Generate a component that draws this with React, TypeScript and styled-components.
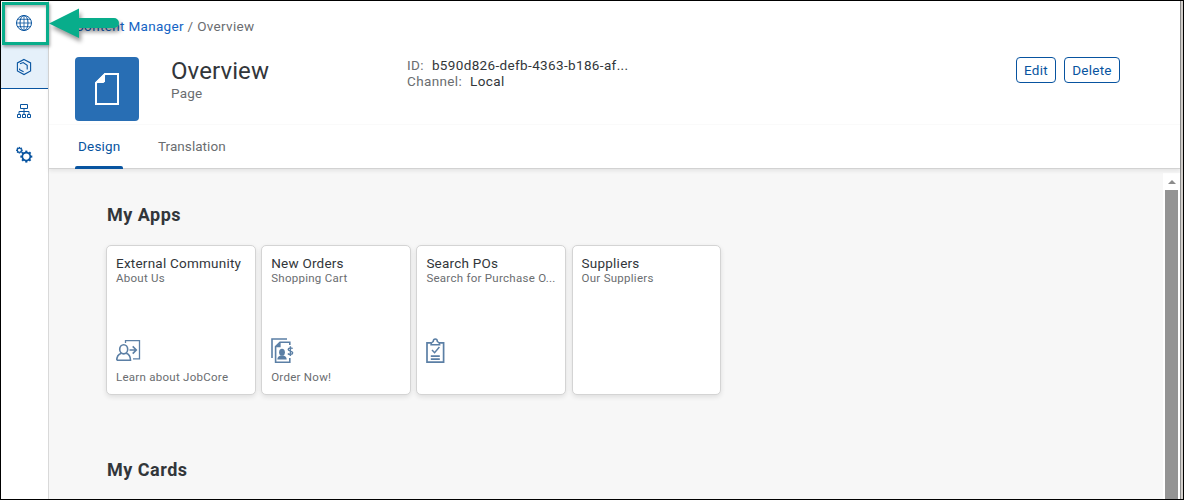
import React from "react";
import styled, { createGlobalStyle } from "styled-components";

const GlobalStyle = createGlobalStyle`
  * { box-sizing: border-box; }
  body { margin: 0; font-family: Roboto, "Liberation Sans", sans-serif; font-size: 13.5px; color: #32363a; }
`;

const Frame = styled.div`
  position: relative;
  display: flex;
  width: 1184px;
  height: 500px;
  border: 1px solid #000;
  background: #fff;
  overflow: hidden;
`;

const SideNav = styled.nav`
  width: 48px;
  flex: none;
  border-right: 1px solid #d9d9d9;
`;

const NavItem = styled.div<{ $active?: boolean }>`
  height: 44px;
  display: flex;
  align-items: center;
  justify-content: center;
  padding-right: 1px;
  padding-top: 1px;
  background: ${(p) => (p.$active ? "#e5f0fa" : "transparent")};
  border-bottom: 1px solid ${(p) => (p.$active ? "#0854a0" : "transparent")};
  svg { display: block; }
`;

const Main = styled.main`
  width: 1131px;
  flex: none;
  display: flex;
  flex-direction: column;
`;

const Edge = styled.div`
  flex: 1;
  background: #d4d0cc;
  border-left: 1px solid #8c8c8c;
`;

const Header = styled.header`
  position: relative;
  flex: none;
  height: 168px;
  background: #fff;
  border-bottom: 1px solid #d2d2d2;
  box-shadow: 0 2px 4px rgba(0, 0, 0, 0.08);
`;

const Breadcrumb = styled.div`
  height: 56px;
  padding: 16px 0 0 26px;
  line-height: 18px;
  color: #6a6d70;
  letter-spacing: 0.33px;
  white-space: pre;
  a { color: #1463c4; }
`;

const ObjectRow = styled.div`
  display: flex;
  height: 68px;
  padding: 0 60px 0 26px;
  border-bottom: 1px solid #fafafa;
`;

const Avatar = styled.div`
  width: 64px;
  height: 64px;
  border-radius: 4px;
  background: #286eb4;
  display: flex;
  align-items: center;
  justify-content: center;
`;

const TitleBlock = styled.div`
  width: 236px;
  margin-left: 32px;
`;

const Title = styled.h1`
  margin: 0;
  font-size: 24px;
  line-height: 28px;
  font-weight: 400;
  letter-spacing: 0.1px;
`;

const Subtitle = styled.div`
  color: #6a6d70;
  line-height: 17px;
  letter-spacing: 0.2px;
`;

const Facts = styled.dl`
  margin: 0;
  flex: 1;
`;

const Fact = styled.div`
  display: flex;
  gap: 8px;
  line-height: 16px;
  letter-spacing: 0.36px;
  dt { color: #6a6d70; }
  dd { margin: 0; }
`;

const Actions = styled.div`
  display: flex;
  gap: 8px;
`;

const Button = styled.button<{ $width: number }>`
  width: ${(p) => p.$width}px;
  height: 26px;
  padding: 0;
  border: 1px solid #0854a0;
  border-radius: 4px;
  background: #fff;
  color: #0854a0;
  font: inherit;
  letter-spacing: 0.25px;
`;

const Tabs = styled.div`
  display: flex;
  gap: 29px;
  height: 44px;
  padding-left: 26px;
`;

const Tab = styled.div<{ $active?: boolean }>`
  height: 44px;
  width: ${(p) => (p.$active ? "48px" : "auto")};
  padding: 0 3px;
  margin-right: 3px;
  line-height: 42px;
  letter-spacing: ${(p) => (p.$active ? 0.2 : 0.05)}px;
  color: ${(p) => (p.$active ? "#0854a0" : "#6a6d70")};
  &::after {
    content: "";
    display: ${(p) => (p.$active ? "block" : "none")};
    width: 48px;
    height: 3px;
    margin: -1px 0 0 -3px;
    border-radius: 2px 2px 0 0;
    background: #0854a0;
  }
`;

const Body = styled.div`
  display: flex;
  flex: 1;
  min-height: 0;
  background: #f7f7f7;
`;

const Content = styled.div`
  flex: 1;
  padding: 35px 0 0 57px;
`;

const SectionTitle = styled.h2`
  margin: 0 0 0 1px;
  font-size: 18px;
  line-height: 22px;
  font-weight: 700;
  letter-spacing: 0.5px;
`;

const CardRow = styled.div`
  display: flex;
  gap: 5.7px;
  margin: 19px 0 64px;
`;

const Card = styled.article`
  width: 149.5px;
  height: 150px;
  padding: 9px 8px 9px 9px;
  display: flex;
  flex-direction: column;
  background: #fff;
  border: 1px solid #d4d4d4;
  border-radius: 5px;
  box-shadow: 0 2px 5px rgba(0, 0, 0, 0.1);
`;

const CardTitle = styled.div`
  line-height: 17px;
  white-space: nowrap;
  letter-spacing: 0.23px;
`;

const CardText = styled.div`
  height: 14px;
  font-size: 11.5px;
  line-height: 13px;
  color: #6a6d70;
  white-space: nowrap;
  letter-spacing: 0.27px;
`;

const CardIcon = styled.div`
  margin-top: auto;
  height: 26px;
  margin-bottom: 7px;
  svg { display: block; }
`;

const ScrollTrack = styled.div`
  width: 17px;
  margin-top: 4px;
  padding: 0 1px 0 2px;
  background: #fff;
`;

const ScrollUp = styled.div`
  height: 17px;
  display: flex;
  justify-content: center;
  align-items: center;
`;

const ScrollThumb = styled.div`
  width: 13px;
  height: 310px;
  background: #949494;
`;

const Highlight = styled.div`
  position: absolute;
  left: 1px;
  top: 1px;
  width: 47px;
  height: 43px;
  border: 3px solid #08ad8b;
  box-shadow: 1px 2px 3px rgba(0, 0, 0, 0.35), inset 1px 2px 3px rgba(0, 0, 0, 0.3);
`;

const Pointer = styled.svg`
  position: absolute;
  left: 44px;
  top: 0;
  filter: drop-shadow(2px 4px 2px rgba(0, 0, 0, 0.4));
`;

const GlobeIcon = () => (
  <svg width="18" height="18" viewBox="0 0 18 18" fill="none" stroke="#0854a0">
    <circle cx="9" cy="9" r="7.5" />
    <ellipse cx="9" cy="9" rx="4" ry="7.5" />
    <path d="M9 1.5v15M1.5 9h15M3 5.3h12M3 12.7h12" strokeWidth=".8" />
  </svg>
);

const HexIcon = () => (
  <svg width="18" height="18" viewBox="0 0 18 18" fill="none" stroke="#0854a0" strokeWidth="1.1">
    <path d="M9 1.4L15.6 4.9V13L9 16.6L2.4 13V4.9Z" />
    <path d="M5 5.8L8.2 4.6L12.2 7.4V11.6M4.6 10.4V11.7L8.6 13.8" />
  </svg>
);

const TreeIcon = () => (
  <svg width="18" height="18" viewBox="0 0 18 18" fill="none" stroke="#0854a0">
    <path d="M5.5 2.5h7v4h-7zM2.5 12.5h3v3h-3zM7.5 12.5h3v3h-3zM12.5 12.5h3v3h-3z" />
    <path d="M9 6.5v6M4 12.5v-3h10v3" />
  </svg>
);

const Gear = ({ x, y, r, w, t }: { x: number; y: number; r: number; w: number; t: number }) => (
  <g transform={`translate(${x} ${y})`}>
    <circle r={r} strokeWidth={w} />
    {Array.from({ length: 8 }, (_, i) => (
      <path key={i} d={`M0 ${-r}V${-r - t}`} strokeWidth={w + 0.4} transform={`rotate(${i * 45})`} />
    ))}
  </g>
);

const GearsIcon = () => (
  <svg width="18" height="18" viewBox="0 0 18 18" fill="none" stroke="#0854a0">
    <Gear x={4.4} y={4.2} r={2} w={1.1} t={1.3} />
    <Gear x={11.3} y={10.6} r={4} w={1.7} t={2} />
  </svg>
);

const PageIcon = () => (
  <svg width="24" height="32" viewBox="0 0 24 32">
    <path d="M10 1H23V31H1V10z" fill="none" stroke="#fff" strokeWidth="2" />
    <path d="M10 0V8.5L8.5 10H0z" fill="#fff" />
  </svg>
);

const VisitorIcon = () => (
  <svg width="26" height="26" viewBox="0 0 26 26" fill="none" stroke="#5b7fa5" strokeWidth="1.6">
    <path d="M9.5 5V2.7H23.5V20.8H17" strokeWidth="1.3" />
    <ellipse cx="7.7" cy="11.3" rx="4" ry="4.6" />
    <path d="M.8 22.2C.8 18.3 3 16 5.2 15.2M10.2 15.2C12.6 16 14.5 18.3 14.5 22.2H.8" />
    <path d="M13.5 12h6.8M16.7 8.4l3.6 3.6-3.6 3.6" />
  </svg>
);

const InvoiceIcon = () => (
  <svg width="26" height="26" viewBox="0 0 26 26" fill="none" stroke="#5b7fa5" strokeWidth="1.6">
    <path d="M1 20V1H16" />
    <path d="M18.8 7V4.2H9L4.6 8.6V24.2H18.8V20" />
    <path d="M9.6 4v5.2H4.2z" fill="#5b7fa5" stroke="none" />
    <ellipse cx="11" cy="14.3" rx="2.9" ry="3.5" fill="#5b7fa5" stroke="none" />
    <path d="M6.3 21.4c0-2.5 1.6-3.5 3.3-4h2.8c1.7.5 3.3 1.5 3.3 4z" fill="#5b7fa5" stroke="none" />
    <path d="M21.6 10.7C20.8 9.5 17.2 9.6 17.2 11.5C17.2 13.6 21.7 12.5 21.7 14.8C21.7 16.9 17.8 16.8 16.9 15.5M19.4 8.2V18" strokeWidth="1.4" />
  </svg>
);

const ClipboardIcon = () => (
  <svg width="19" height="26" viewBox="0 0 19 26" fill="none" stroke="#5b7fa5" strokeWidth="1.7">
    <path d="M5.5 4.8H1V24.2H17.6V4.8H13" />
    <path d="M5 6.8C5 4.6 6.5 4 7.2 3.6C7.4.2 11.2.2 11.4 3.6C12.2 4 13.7 4.6 13.7 6.8Z" strokeWidth="1.5" />
    <path d="M6 12l2.6 2.7L13.4 9" strokeWidth="1.5" />
    <path d="M4.8 18.2h9M4.8 21.2h9" strokeWidth="1.8" />
  </svg>
);

type CardData = {
  title: string;
  text: string;
  icon?: React.ReactNode;
  footer?: string;
};

const cards: CardData[] = [
  { title: "External Community", text: "About Us", icon: <VisitorIcon />, footer: "Learn about JobCore" },
  { title: "New Orders", text: "Shopping Cart", icon: <InvoiceIcon />, footer: "Order Now!" },
  { title: "Search POs", text: "Search for Purchase O...", icon: <ClipboardIcon /> },
  { title: "Suppliers", text: "Our Suppliers" },
];

export default function App() {
  return (
    <>
      <GlobalStyle />
      <Frame>
        <SideNav>
          <NavItem><GlobeIcon /></NavItem>
          <NavItem $active><HexIcon /></NavItem>
          <NavItem><TreeIcon /></NavItem>
          <NavItem><GearsIcon /></NavItem>
        </SideNav>
        <Main>
          <Header>
            <Breadcrumb><a>Content Manager</a> / Overview</Breadcrumb>
            <ObjectRow>
              <Avatar><PageIcon /></Avatar>
              <TitleBlock>
                <Title>Overview</Title>
                <Subtitle>Page</Subtitle>
              </TitleBlock>
              <Facts>
                <Fact><dt>ID:</dt><dd>b590d826-defb-4363-b186-af...</dd></Fact>
                <Fact><dt>Channel:</dt><dd>Local</dd></Fact>
              </Facts>
              <Actions>
                <Button $width={40}>Edit</Button>
                <Button $width={56}>Delete</Button>
              </Actions>
            </ObjectRow>
            <Tabs>
              <Tab $active>Design</Tab>
              <Tab>Translation</Tab>
            </Tabs>
          </Header>
          <Body>
            <Content>
              <SectionTitle>My Apps</SectionTitle>
              <CardRow>
                {cards.map((c) => (
                  <Card key={c.title}>
                    <CardTitle>{c.title}</CardTitle>
                    <CardText>{c.text}</CardText>
                    <CardIcon>{c.icon}</CardIcon>
                    <CardText>{c.footer}</CardText>
                  </Card>
                ))}
              </CardRow>
              <SectionTitle>My Cards</SectionTitle>
            </Content>
            <ScrollTrack>
              <ScrollUp>
                <svg width="8" height="4" viewBox="0 0 8 4"><path d="M4 0l4 4H0z" fill="#8c8c8c" /></svg>
              </ScrollUp>
              <ScrollThumb />
            </ScrollTrack>
          </Body>
        </Main>
        <Edge />
        <Highlight />
        <Pointer width="84" height="50" viewBox="0 0 84 50">
          <path d="M4 22.5L34 7.5V17H69a5 5 0 0 1 0 10H34V37z" fill="#08ad8b" />
        </Pointer>
      </Frame>
    </>
  );
}
